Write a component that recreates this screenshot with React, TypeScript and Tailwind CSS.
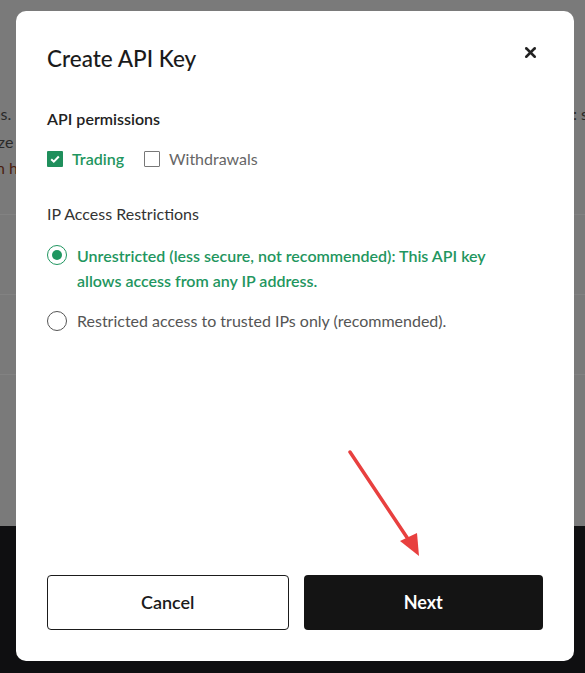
import { X } from "lucide-react"

export default function App() {
  return (
    <div className="relative h-[673px] w-full overflow-hidden bg-[#7a7a7a] font-['Lato',sans-serif]">
      {/* Page behind the dimmed overlay */}
      <div className="flex h-full flex-col">
        <div className="flex h-[526px] flex-col pt-[100px]">
          <div className="flex justify-between text-[16px] leading-[28px] text-[#2a2a2a]">
            <span className="-ml-[8px]">es.</span>
            <span className="mr-[-3px]">: s</span>
          </div>
          <div className="-ml-[6px] text-[16px] leading-[28px] text-[#2a2a2a]">ize</div>
          <div className="-ml-[4px] text-[16px] leading-[24px] text-[#4a1e10]">n h</div>
          <div className="mt-[34px] border-b border-[#828282]" />
          <div className="mt-[79px] border-b border-[#828282]" />
          <div className="mt-[79px] border-b border-[#828282]" />
        </div>
        <div className="flex-1 bg-[#0f0f11]" />
      </div>

      {/* Modal */}
      <div className="absolute left-[16px] top-[11px] flex h-[650px] w-[558px] flex-col rounded-[10px] bg-white px-[31px] pt-[33px] pb-[31px]">
        <div className="flex items-start justify-between">
          <h2 className="text-[22.5px] font-medium leading-[30px] text-[#1b1b1b]">Create API Key</h2>
          <X className="mr-[4px] mt-[0px] h-[17px] w-[17px] text-[#222]" strokeWidth={3.6} />
        </div>

        <div className="mt-[35px] text-[16px] font-semibold leading-[20px] text-[#222]">API permissions</div>
        <div className="mt-[18px] flex items-center">
          <span className="flex h-[16px] w-[16px] items-center justify-center rounded-[1px] bg-[#1f8f5c]">
            <svg viewBox="0 0 12 12" className="h-[12px] w-[12px]">
              <path d="M2.2 6.2 4.8 8.7 9.8 3.5" fill="none" stroke="white" strokeWidth="2" />
            </svg>
          </span>
          <span className="ml-[9px] text-[16px] font-semibold text-[#1f9660]">Trading</span>
          <span className="ml-[20px] h-[16px] w-[16px] rounded-[1px] border border-[#777]" />
          <span className="ml-[9px] text-[16px] text-[#666]">Withdrawals</span>
        </div>

        <div className="mt-[33px] text-[16px] leading-[20px] text-[#333]">IP Access Restrictions</div>

        <div className="mt-[19px] flex items-start">
          <span className="mt-[2px] flex h-[20px] w-[20px] shrink-0 items-center justify-center rounded-full border border-[#1f9660]">
            <span className="h-[10px] w-[10px] rounded-full bg-[#1f9660]" />
          </span>
          <span className="ml-[10px] max-w-[430px] text-[16px] font-semibold leading-[25px] text-[#1f9660]">
            Unrestricted (less secure, not recommended): This API key allows access from any IP address.
          </span>
        </div>
        <div className="mt-[15px] flex items-center">
          <span className="h-[20px] w-[20px] shrink-0 rounded-full border border-[#555]" />
          <span className="ml-[10px] text-[16px] leading-[25px] text-[#555]">
            Restricted access to trusted IPs only (recommended).
          </span>
        </div>

        <div className="mt-auto flex gap-[15px]">
          <button className="h-[55px] flex-1 rounded-[4px] border border-[#1b1b1b] bg-white text-[18px] font-semibold text-[#1b1b1b]">
            Cancel
          </button>
          <button className="h-[55px] flex-1 rounded-[4px] bg-[#141414] text-[18px] font-bold text-white">
            Next
          </button>
        </div>
      </div>

      {/* Annotation arrow */}
      <svg className="absolute left-0 top-0 h-[673px] w-[585px]" viewBox="0 0 585 673">
        <line x1="350" y1="452" x2="412" y2="545" stroke="#e8403f" strokeWidth="3.5" strokeLinecap="round" />
        <path d="M419 556 L400 541 L417 533 Z" fill="#e8403f" />
      </svg>
    </div>
  )
}
